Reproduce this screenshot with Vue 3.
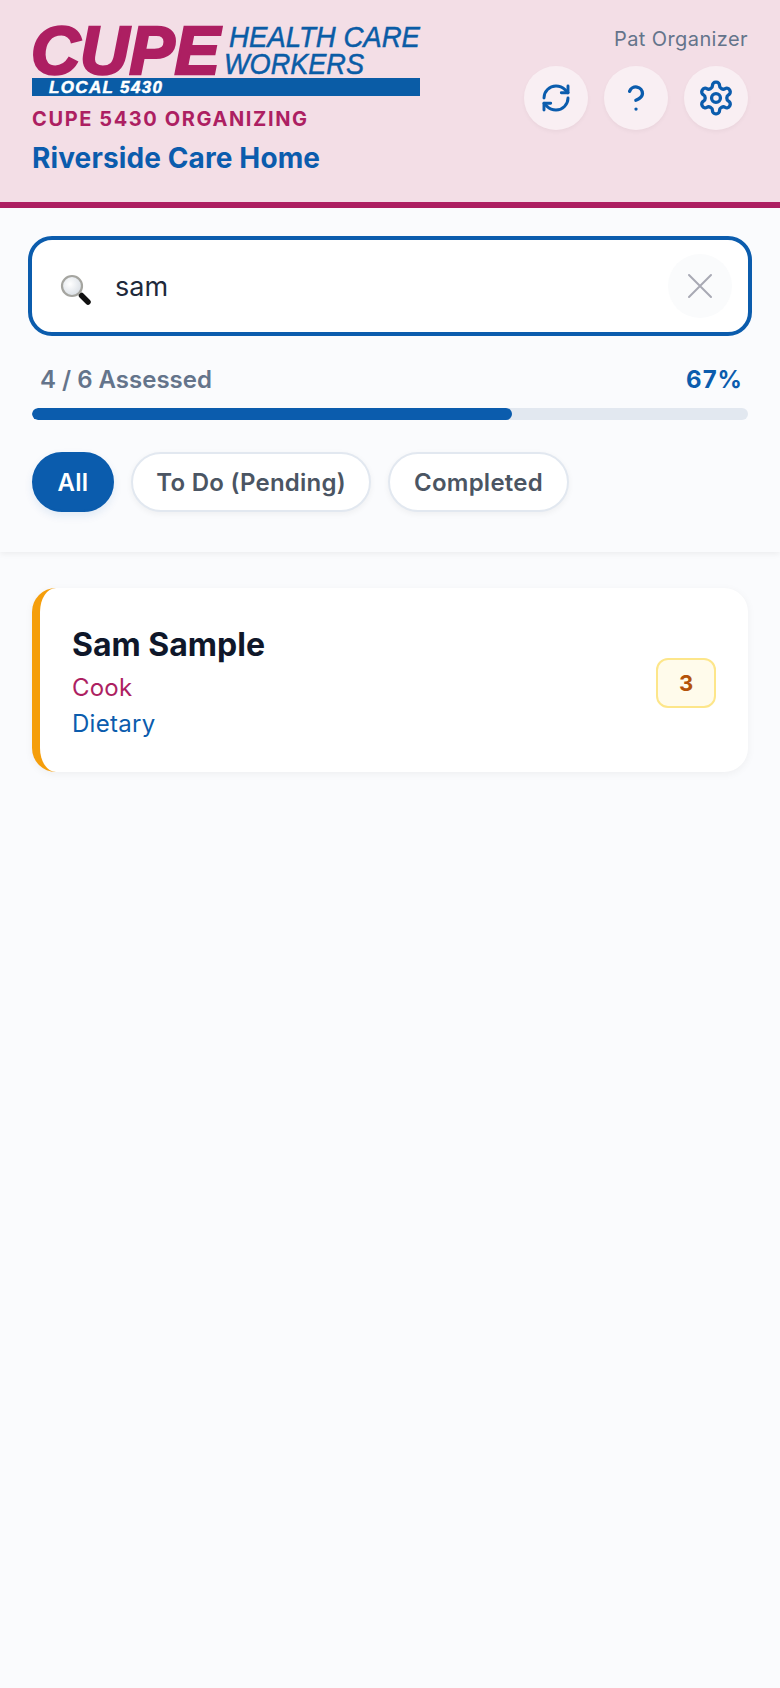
<script setup>
const filters = [
  { label: 'All', active: true },
  { label: 'To Do (Pending)', active: false },
  { label: 'Completed', active: false }
]
</script>

<template>
  <div class="page">
    <header class="header">
      <div class="brand">
        <svg class="logo" width="388" height="72" viewBox="0 0 388 72">
          <text x="-1" y="50" class="logo-cupe" textLength="189" lengthAdjust="spacingAndGlyphs">CUPE</text>
          <text x="197" y="23" class="logo-health" textLength="191" lengthAdjust="spacingAndGlyphs">HEALTH CARE</text>
          <text x="192" y="50" class="logo-workers" textLength="140" lengthAdjust="spacingAndGlyphs">WORKERS</text>
          <rect x="0" y="54" width="388" height="18" fill="#0a5ca6" />
          <text x="17" y="69" class="logo-local" textLength="113" lengthAdjust="spacing">LOCAL 5430</text>
        </svg>
        <div class="org">CUPE 5430 ORGANIZING</div>
        <div class="site">Riverside Care Home</div>
      </div>
      <div class="user-area">
        <div class="user">Pat Organizer</div>
        <div class="actions">
          <button class="round">
            <svg width="32" height="32" viewBox="0 0 24 24" fill="none" stroke="#0b5cad" stroke-width="2.2" stroke-linecap="round" stroke-linejoin="round">
              <path d="M3 12a9 9 0 0 1 9-9 9.75 9.75 0 0 1 6.74 2.74L21 8" />
              <path d="M21 3v5h-5" />
              <path d="M21 12a9 9 0 0 1-9 9 9.75 9.75 0 0 1-6.74-2.74L3 16" />
              <path d="M8 16H3v5" />
            </svg>
          </button>
          <button class="round">
            <svg width="32" height="32" viewBox="4.75 4.75 14.5 14.5" fill="none" stroke="#0b5cad" stroke-width="1.5" stroke-linecap="round" stroke-linejoin="round">
              <path d="M9.09 9a3 3 0 0 1 5.83 1c0 2-3 3-3 3" />
              <path d="M12 17h.01" />
            </svg>
          </button>
          <button class="round">
            <svg width="38" height="38" viewBox="0 0 24 24" fill="none" stroke="#0b5cad" stroke-width="2.1" stroke-linecap="round" stroke-linejoin="round">
              <path d="M12.22 2h-.44a2 2 0 0 0-2 2v.18a2 2 0 0 1-1 1.73l-.43.25a2 2 0 0 1-2 0l-.15-.08a2 2 0 0 0-2.73.73l-.22.38a2 2 0 0 0 .73 2.73l.15.1a2 2 0 0 1 1 1.72v.51a2 2 0 0 1-1 1.74l-.15.09a2 2 0 0 0-.73 2.73l.22.38a2 2 0 0 0 2.73.73l.15-.08a2 2 0 0 1 2 0l.43.25a2 2 0 0 1 1 1.73V20a2 2 0 0 0 2 2h.44a2 2 0 0 0 2-2v-.18a2 2 0 0 1 1-1.73l.43-.25a2 2 0 0 1 2 0l.15.08a2 2 0 0 0 2.73-.73l.22-.39a2 2 0 0 0-.73-2.73l-.15-.08a2 2 0 0 1-1-1.74v-.5a2 2 0 0 1 1-1.74l.15-.09a2 2 0 0 0 .73-2.73l-.22-.38a2 2 0 0 0-2.73-.73l-.15.08a2 2 0 0 1-2 0l-.43-.25a2 2 0 0 1-1-1.73V4a2 2 0 0 0-2-2z" />
              <circle cx="12" cy="12" r="2.8" />
            </svg>
          </button>
        </div>
      </div>
    </header>

    <section class="controls">
      <div class="search">
        <svg class="mag" width="34" height="34" viewBox="0 0 34 34">
          <defs>
            <radialGradient id="lens" cx="0.4" cy="0.4" r="0.7">
              <stop offset="0" stop-color="#ffffff" />
              <stop offset="1" stop-color="#d5dbe2" />
            </radialGradient>
          </defs>
          <line x1="20" y1="20" x2="24" y2="24" stroke="#8a8a86" stroke-width="3" />
          <line x1="23.5" y1="23.5" x2="30" y2="30" stroke="#111" stroke-width="5.5" stroke-linecap="round" />
          <circle cx="14" cy="14" r="10" fill="url(#lens)" stroke="#a5a5a0" stroke-width="2.2" />
        </svg>
        <span class="query">sam</span>
        <button class="clear">
          <svg width="26" height="26" viewBox="0 0 26 26" fill="none" stroke="#a8a9b4" stroke-width="2" stroke-linecap="round">
            <path d="M2 2l22 22M24 2L2 24" />
          </svg>
        </button>
      </div>

      <div class="progress-labels">
        <span class="assessed">4 / 6 Assessed</span>
        <span class="pct">67%</span>
      </div>
      <div class="track"><div class="fill" :style="{ width: '67%' }"></div></div>

      <div class="filters">
        <button v-for="f in filters" :key="f.label" class="pill" :class="{ active: f.active }">{{ f.label }}</button>
      </div>
    </section>

    <main class="list">
      <article class="card">
        <div class="info">
          <div class="name">Sam Sample</div>
          <div class="job">Cook</div>
          <div class="dept">Dietary</div>
        </div>
        <div class="badge">3</div>
      </article>
    </main>
  </div>
</template>

<style>
html, body { margin: 0; background: #fafbfd; }
</style>

<style scoped>
.page {
  width: 780px;
  min-height: 1688px;
  background: #fafbfd;
  font-family: Inter, "Noto Sans", sans-serif;
  display: flex;
  flex-direction: column;
}
button { font-family: inherit; border: 0; padding: 0; }
.header {
  box-sizing: border-box;
  height: 208px;
  background: #f3dee6;
  border-bottom: 6px solid #ad1f62;
  padding: 24px 32px 0;
  display: flex;
  justify-content: space-between;
}
.logo { display: block; overflow: visible; }
.logo text { font-family: "Liberation Sans", Arial, sans-serif; font-style: italic; }
.logo-cupe { font-size: 69px; font-weight: 700; fill: #ad1f62; stroke: #ad1f62; stroke-width: 2.6px; }
.logo-health { font-size: 29px; fill: #0a5ca6; stroke: #0a5ca6; stroke-width: 0.5px; }
.logo-workers { font-size: 29px; fill: #0a5ca6; stroke: #0a5ca6; stroke-width: 0.5px; }
.logo-local { font-size: 17px; font-weight: 700; fill: #fff; stroke: #fff; stroke-width: 0.5px; }
.org {
  margin-top: 12px;
  font-size: 20px;
  line-height: 22px;
  font-weight: 700;
  letter-spacing: 1.6px;
  color: #ad1f62;
}
.site {
  margin-top: 10px;
  font-size: 28px;
  line-height: 36px;
  font-weight: 700;
  letter-spacing: 0.12px;
  color: #0b5cad;
}
.user-area { display: flex; flex-direction: column; align-items: flex-end; }
.user {
  margin-top: 4px;
  font-size: 20px;
  line-height: 22px;
  font-weight: 400;
  letter-spacing: 0.4px;
  color: #64748b;
}
.actions { display: flex; gap: 16px; margin-top: 16px; }
.round {
  width: 64px;
  height: 64px;
  border-radius: 50%;
  background: rgba(255, 255, 255, 0.5);
  box-shadow: 0 2px 4px rgba(0, 0, 0, 0.04);
  display: flex;
  align-items: center;
  justify-content: center;
}
.controls {
  box-sizing: border-box;
  height: 344px;
  padding: 28px 32px 0;
  box-shadow: 0 2px 6px rgba(0, 0, 0, 0.06);
  background: #fafbfd;
}
.search {
  box-sizing: border-box;
  margin: 0 -4px;
  height: 100px;
  background: #fff;
  border: 4px solid #0b5cad;
  border-radius: 24px;
  display: flex;
  align-items: center;
  padding: 0 16px 0 26px;
}
.mag { flex: none; margin-top: 6px; }
.query {
  margin-left: 23px;
  font-size: 27px;
  color: #1e293b;
  flex: 1;
}
.clear {
  width: 64px;
  height: 64px;
  border-radius: 50%;
  background: #fafbfc;
  display: flex;
  align-items: center;
  justify-content: center;
}
.progress-labels {
  display: flex;
  justify-content: space-between;
  padding: 0 5px 0 8px;
  margin-top: 28px;
  font-size: 24px;
  line-height: 32px;
  font-weight: 600;
}
.assessed { color: #64748b; }
.pct { color: #0b5cad; font-weight: 700; letter-spacing: 1px; }
.track {
  margin-top: 12px;
  height: 12px;
  border-radius: 6px;
  background: #e2e8f0;
  overflow: hidden;
}
.fill { height: 100%; background: #0b5cad; border-radius: 6px; }
.filters { display: flex; gap: 17px; margin-top: 32px; }
.pill {
  box-sizing: border-box;
  height: 60px;
  padding: 0 23.5px;
  border-radius: 30px;
  background: #fff;
  border: 2px solid #e2e8f0;
  box-shadow: 0 2px 6px rgba(0, 0, 0, 0.05);
  color: #4b5563;
  font-size: 24px;
  font-weight: 600;
  letter-spacing: 0.25px;
}
.pill.active {
  background: #0b5cad;
  border-color: #0b5cad;
  color: #fff;
  box-shadow: 0 4px 8px rgba(11, 92, 173, 0.1);
}
.list { padding: 36px 32px 0; }
.card {
  box-sizing: border-box;
  height: 184px;
  background: #fff;
  border-left: 8px solid #f59e0b;
  border-radius: 24px;
  box-shadow: 0 2px 8px rgba(0, 0, 0, 0.05);
  padding: 4px 32px 0;
  display: flex;
  align-items: center;
  justify-content: space-between;
}
.name {
  font-size: 32px;
  line-height: 40px;
  font-weight: 700;
  color: #0f172a;
}
.job {
  margin-top: 7px;
  font-size: 24px;
  line-height: 32px;
  letter-spacing: 0.2px;
  color: #ad1f62;
}
.dept {
  margin-top: 4px;
  font-size: 24px;
  line-height: 32px;
  letter-spacing: 0.3px;
  color: #0b5cad;
}
.badge {
  box-sizing: border-box;
  width: 60px;
  height: 50px;
  margin-top: 2px;
  border: 2px solid #fde68a;
  border-radius: 12px;
  background: #fffbeb;
  color: #b45309;
  font-size: 22px;
  font-weight: 700;
  display: flex;
  align-items: center;
  justify-content: center;
}
</style>
